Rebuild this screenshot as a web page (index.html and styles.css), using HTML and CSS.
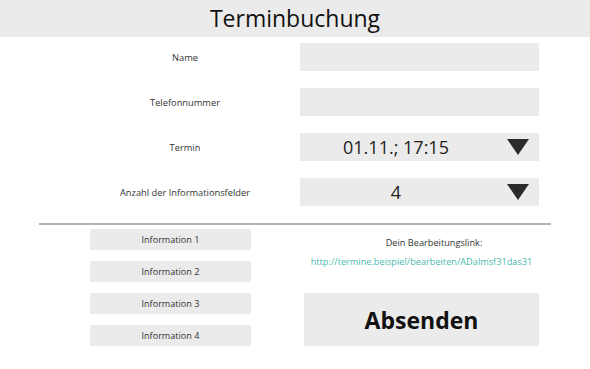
FILE: index.html
```html
<!DOCTYPE html>
<html lang="de">
  <head>
    <meta charset="UTF-8" />
    <title>Terminbuchung</title>
    <link rel="stylesheet" href="styles.css">
  </head>
  <body>
    <div class="header">Terminbuchung</div>

    <div class="form">
      <div class="row">
        <div class="label">Name</div>
        <div class="field"></div>
      </div>
      <div class="row">
        <div class="label">Telefonnummer</div>
        <div class="field"></div>
      </div>
      <div class="row">
        <div class="label">Termin</div>
        <div class="field select">
          <span class="value">01.11.; 17:15</span>
          <svg class="arrow" width="22" height="16" viewBox="0 0 22 16"><polygon points="0,0 22,0 11,16" fill="#2b2b2b"/></svg>
        </div>
      </div>
      <div class="row">
        <div class="label">Anzahl der Informationsfelder</div>
        <div class="field select">
          <span class="value">4</span>
          <svg class="arrow" width="22" height="16" viewBox="0 0 22 16"><polygon points="0,0 22,0 11,16" fill="#2b2b2b"/></svg>
        </div>
      </div>
    </div>

    <div class="divider"></div>

    <div class="bottom">
      <div class="infos">
        <div class="info">Information 1</div>
        <div class="info">Information 2</div>
        <div class="info">Information 3</div>
        <div class="info">Information 4</div>
      </div>
      <div class="side">
        <div class="link-title">Dein Bearbeitungslink:</div>
        <div class="link">http://termine.beispiel/bearbeiten/ADalmsf31das31</div>
        <button class="submit">Absenden</button>
      </div>
    </div>
  </body>
</html>
```

FILE: styles.css
```css
body {
  margin: 0;
  font-family: "Open Sans", "DejaVu Sans", sans-serif;
  color: #222;
  background: #fff;
}
.header {
  height: 37px;
  line-height: 37px;
  background: #ebebeb;
  text-align: center;
  font-size: 23px;
  color: #111;
}
.form {
  padding-top: 6px;
}
.row {
  display: flex;
  align-items: center;
  padding-left: 70px;
  margin-bottom: 17px;
}
.row:last-child {
  margin-bottom: 0;
}
.label {
  width: 230px;
  text-align: center;
  font-size: 9.3px;
  color: #333;
}
.field {
  width: 239px;
  height: 28px;
  background: #ebebeb;
}
.select {
  display: flex;
  align-items: center;
  padding-right: 10px;
  box-sizing: border-box;
}
.value {
  flex: 1;
  text-align: center;
  font-size: 18px;
  color: #222;
  margin-right: 15px;
}
.arrow {
  display: block;
}
.divider {
  height: 2px;
  background: #b4b4b4;
  margin: 17px 39px 0 39px;
}
.bottom {
  display: flex;
}
.infos {
  padding-left: 90px;
  padding-top: 4px;
  width: 161px;
}
.info {
  height: 21px;
  line-height: 21px;
  margin-bottom: 11px;
  background: #ebebeb;
  text-align: center;
  font-size: 9.1px;
  color: #333;
}
.side {
  margin-left: 53px;
  width: 235px;
  padding-top: 11px;
  text-align: center;
  font-size: 9.2px;
}
.link-title {
  line-height: 14px;
  color: #333;
  padding-left: 25px;
}
.link {
  line-height: 14px;
  margin-top: 5px;
  color: #4bbab0;
}
.submit {
  display: block;
  width: 235px;
  height: 53px;
  margin-top: 24px;
  border: none;
  background: #ebebeb;
  font-family: "Open Sans", "DejaVu Sans", sans-serif;
  font-size: 23px;
  font-weight: bold;
  color: #111;
  padding: 0;
}
```
